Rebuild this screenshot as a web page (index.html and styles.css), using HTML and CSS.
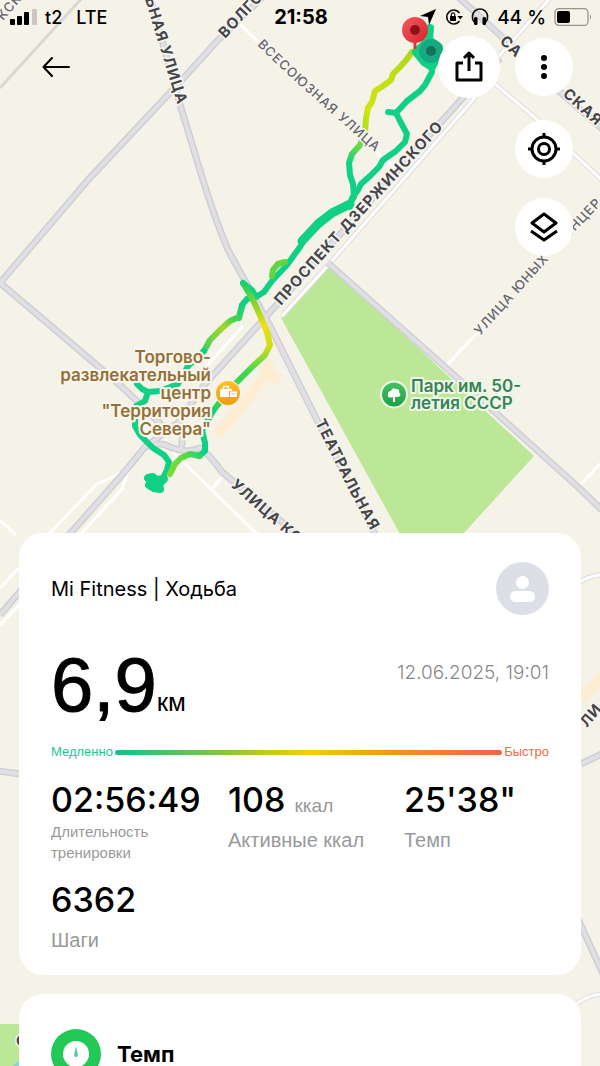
FILE: index.html
```html
<!DOCTYPE html>
<html lang="ru">
<head>
<meta charset="utf-8">
<meta name="viewport" content="width=device-width, initial-scale=1">
<title>Mi Fitness | Ходьба</title>
<link rel="stylesheet" href="styles.css">
</head>
<body>
<div class="screen">
  <svg class="map" viewBox="0 0 600 1066" preserveAspectRatio="xMidYMin slice" role="img" aria-label="Карта маршрута">
    <defs>
      <linearGradient id="g-north" gradientUnits="userSpaceOnUse" x1="412" y1="52" x2="352" y2="165">
        <stop offset="0" stop-color="#a8d820"/><stop offset=".25" stop-color="#c2de16"/><stop offset=".55" stop-color="#d3e311"/><stop offset=".75" stop-color="#a2dd20"/><stop offset="1" stop-color="#0fd285"/>
      </linearGradient>
      <linearGradient id="g-south" gradientUnits="userSpaceOnUse" x1="243" y1="283" x2="262" y2="400">
        <stop offset="0" stop-color="#17cf70"/><stop offset=".2" stop-color="#8bd52c"/><stop offset=".38" stop-color="#f0e10e"/><stop offset=".58" stop-color="#c9dd18"/><stop offset=".75" stop-color="#3cd653"/><stop offset="1" stop-color="#2fd354"/>
      </linearGradient>
      <linearGradient id="g-west" gradientUnits="userSpaceOnUse" x1="245" y1="305" x2="200" y2="360">
        <stop offset="0" stop-color="#10d086"/><stop offset=".25" stop-color="#44d350"/><stop offset=".45" stop-color="#a6d729"/><stop offset=".8" stop-color="#49d25c"/><stop offset="1" stop-color="#10d086"/>
      </linearGradient>
      <linearGradient id="g-end" gradientUnits="userSpaceOnUse" x1="168" y1="475" x2="205" y2="450">
        <stop offset="0" stop-color="#7bdc35"/><stop offset=".5" stop-color="#62d940"/><stop offset="1" stop-color="#10d086"/>
      </linearGradient>
      <linearGradient id="g-pin" x1="0" y1="0" x2="1" y2="1"><stop offset="0" stop-color="#f3595d"/><stop offset="1" stop-color="#d9252e"/></linearGradient>
      <linearGradient id="g-shop" x1="0" y1="0" x2="0" y2="1"><stop offset="0" stop-color="#ffc02e"/><stop offset="1" stop-color="#ee9d0c"/></linearGradient>
      <linearGradient id="g-tree" x1="0" y1="0" x2="0" y2="1"><stop offset="0" stop-color="#45c163"/><stop offset="1" stop-color="#1f9f45"/></linearGradient>
      <path id="p-left" d="M145 -1 L158 42 L184 125"/>
      <path id="p-volgo" d="M225 39 L270 -9"/>
      <path id="p-union" d="M257 45 Q279 67 306 91 T384 160"/>
      <path id="p-dzer" d="M281 306 L340 240 L450 120"/>
      <path id="p-teatr" d="M315 422 Q332 456 346 485 L390 566"/>
      <path id="p-young" d="M480 336 L560 247 L640 164"/>
      <path id="p-ul" d="M230 486 L262 514 L310 556"/>
      <path id="p-skaya" d="M562 95 L622 149"/>
    </defs>

    <rect width="600" height="1066" class="land"/>
    <path class="park" d="M328 264 L281 318 L400 534 L420 570 L463 534 L534 456Z"/>
    <rect class="park" y="1024" width="30" height="42"/>
    <path d="M13 1066 Q16 1061 26 1060 V1066Z" fill="#8fcdec"/>
    <path class="mall" d="M216 436 L250 396 L268 372 L280 381 M264 372 L272 362"/>
    <path class="mall" d="M581 699 L605 674"/>

    <g class="thin-gray"><path d="M82 -2 L0 88"/></g>
    <g class="lane-edge">
      <path d="M552 -4 L500 55 L473 100 L330 263 L282 316 M495 84 L540 122 L606 184"/>
      <path d="M578 583 Q590 575 606 574 M574 1006 Q588 994 606 994"/>
    </g>
    <g class="lane">
      <path d="M552 -4 L500 55 L473 100 L330 263 L282 316 M495 84 L540 122 L606 184"/>
      <path d="M445 367 L480 330 M578 487 L606 458 M238 22 L258 42 M376 152 L396 169"/>
      <path d="M243 326 L205 368 M128 470 L97 484 L44 539 M128 472 L122 489 L78 537 M173 452 L260 537 M223 476 L211 490"/>
      <path d="M0 520 L16 535 M0 588 L22 565 M0 625 L22 602 M268 290 L300 254"/>
      <path d="M578 583 Q590 575 606 574 M574 1006 Q588 994 606 994"/>
    </g>
    <g class="road-edge">
      <path d="M268 -8 L218 40 L180 82 L88 180 L0 283 L45 321 L120 385 L172 435"/>
      <path d="M148 -10 L181 108 L203 180 Q214 216 228 250 L270 326 L318 422 L388 560"/>
      <path d="M500 58 L460 101 L272 310 L205 384 L178 423 L145 447 L122 475 L60 545 L0 615"/>
      <path d="M328 263 L445 367 L578 487 L606 514"/>
      <path d="M456 -5 L500 35 L560 92 L606 132"/>
      <path d="M145 447 Q160 441 170 447 Q188 454 200 448 Q210 455 222 472 L300 537 M183 434 L181 450"/>
      <path d="M581 764 L606 752 M577 917 L604 976 M-2 771 L20 774"/>
    </g>
    <g class="road-fill">
      <path d="M268 -8 L218 40 L180 82 L88 180 L0 283 L45 321 L120 385 L172 435"/>
      <path d="M148 -10 L181 108 L203 180 Q214 216 228 250 L270 326 L318 422 L388 560"/>
      <path d="M500 58 L460 101 L272 310 L205 384 L178 423 L145 447 L122 475 L60 545 L0 615"/>
      <path d="M328 263 L445 367 L578 487 L606 514"/>
      <path d="M456 -5 L500 35 L560 92 L606 132"/>
      <path d="M145 447 Q160 441 170 447 Q188 454 200 448 Q210 455 222 472 L300 537 M183 434 L181 450"/>
      <path d="M581 764 L606 752 M577 917 L604 976 M-2 771 L20 774"/>
    </g>

    <g class="track">
      <path class="green" d="M431 55 L432 72 L425 85 L420 91 L407 101 L396 113 L388 112 M396 113 L400 121 L407 134 L405 142 L396 151 L383 160 L379 167 L370 176 L361 184 L358 190 L352 198 L350 207 L341 207 L332 212 L318 222 L307 235 L300 247 L287 265 L272 281 L264 292 L256 297 L252 290 L243 283"/>
      <path class="wide" d="M350 204 L332 213 L318 224 L302 241"/>
      <path d="M412 52 L407 59 L400 67 L393 74 L391 80 L383 86 L375 91 L372 102 L368 108 L366 118 L365 132 L360 145 L352 154 L349 163 L350 175 L353 184 L354 197 L347 207" stroke="url(#g-north)"/>
      <path class="lime" d="M285 262 L278 264 L273 270 L272 276"/>
      <path class="green" d="M256 297 L247 299 L242 305 L239 318"/>
      <path d="M242 307 L239 317 L230 321 L220 330 L210 340 L204 351" stroke="url(#g-west)"/>
      <path class="green" d="M204 351 L188 366 L178 384 L160 391 L148 392 L142 389 L137 384 M148 392 L145 401 L136 406 L135 426 L140 435 L153 448 L164 455 L169 462 L167 470 L162 480 L152 484"/>
      <path d="M243 283 L253 300 L262 320 L267 332 L270 345 L265 355 L253 366 L243 376 L230 389 L213 411" stroke="url(#g-south)"/>
      <path class="green" d="M213 411 L202 430 L205 443 L205 451 L199 456"/>
      <path d="M200 456 L190 454 L181 458 L175 464 L170 474" stroke="url(#g-end)"/>
      <path class="blob fill" d="M148 478 L153 477 L155 480 L164 479 L159 484 L160 489 L154 488 L149 485 L152 482Z"/>
      <path class="blob fill" d="M416 52 L424 62 L432 67 L437 57 L439 47 L429 40 Z M429 40 L430 28"/>
    </g>

    <g class="street">
      <text><textPath href="#p-left">ЬНАЯ УЛИЦА</textPath></text>
      <text><textPath href="#p-volgo">ВОЛГО</textPath></text>
      <text><textPath href="#p-dzer">ПРОСПЕКТ ДЗЕРЖИНСКОГО</textPath></text>
      <text><textPath href="#p-teatr">ТЕАТРАЛЬНАЯ</textPath></text>
      <text><textPath href="#p-ul">УЛИЦА КО</textPath></text>
      <text><textPath href="#p-skaya">СКАЯ</textPath></text>
      <text transform="translate(499 42) rotate(44)">СА</text>
      <text transform="translate(587 728) rotate(-50)">ЛИ</text>
      <text transform="translate(16 1046)">О</text>
    </g>
    <g class="street minor">
      <text><textPath href="#p-union">ВСЕСОЮЗНАЯ УЛИЦА</textPath></text>
      <text><textPath href="#p-young">УЛИЦА ЮНЫХ ПИОНЦЕР</textPath></text>
      <text transform="translate(3 21) rotate(-49)">КСК</text>
    </g>

    <circle cx="431" cy="51" r="12" fill="#17aa82"/><circle cx="431" cy="51" r="5" fill="#147258"/>
    <path d="M415 40 V49" stroke="#dc343b" stroke-width="3"/><circle cx="415" cy="30" r="13" fill="url(#g-pin)"/><circle cx="415" cy="30" r="5" fill="#8d1119"/>

    <g class="place mall-name">
      <text x="211" y="363">Торгово-</text><text x="211" y="381">развлекательный</text><text x="211" y="399">центр</text><text x="211" y="417">"Территория</text><text x="211" y="435">Севера"</text>
    </g>
    <g class="place park-name"><text x="411" y="392">Парк им. 50-</text><text x="411" y="409">летия СССР</text></g>

    <circle cx="228" cy="393" r="13" fill="#fff4dc"/><circle cx="228" cy="393" r="12" fill="url(#g-shop)"/>
    <path d="M221 389 H232 V391 H229 V397 H220 V390Z M230 391.500 H237 V397 H230Z" fill="#fff"/>
    <path d="M223.500 389 V386.500 H228.500 V389" fill="none" stroke="#fff" stroke-width="1.500"/>
    <path d="M229.500 391 V397 M231.500 393 Q233.500 396 235.500 393" fill="none" stroke="#f0a518" stroke-width=".8"/>
    <circle cx="394" cy="394.500" r="14" fill="#edf8e6"/><circle cx="394" cy="394.500" r="12" fill="url(#g-tree)"/>
    <path d="M393 402 V397 Q387 399 388 394 Q388 391 391 391 Q392 387 396 389 Q400 389 399 392 Q403 397 396 397 H395 V402Z" fill="#fff"/>
  </svg>

  <section class="map-area">
    <header class="status">
      <div class="carrier">
        <svg width="27" height="16" viewBox="0 0 27 16" aria-hidden="true"><rect y="10" width="5" height="6" rx="1"/><rect x="7" y="7" width="5" height="9" rx="1"/><rect x="14" y="3" width="5" height="13" rx="1"/><rect x="22" width="5" height="16" rx="1" fill="#c9c7c0"/></svg>
        <span>t2</span><span class="network">LTE</span>
      </div>
      <time class="clock">21:58</time>
      <div class="indicators">
        <svg width="17" height="16" viewBox="0 0 17 16" aria-hidden="true"><path d="M16 0 L9 16 L8 8 L0 7Z"/></svg>
        <svg class="lock" width="18" height="18" viewBox="0 0 18 18" aria-hidden="true"><path d="M14.500 5 A7 7 0 1 0 14.500 13" fill="none" stroke="#111" stroke-width="1.700"/><path d="M12.500 8 H18 L15.200 11.500Z"/><rect x="5" y="8" width="6" height="5" rx=".5"/><path d="M6.300 8 V6.500 A1.700 1.700 0 0 1 9.700 6.500 V8" fill="none" stroke="#111" stroke-width="1.200"/></svg>
        <svg width="18" height="18" viewBox="0 0 18 18" aria-hidden="true"><path d="M3 14 Q1 11 1.500 8 A7.500 7 0 0 1 16.500 8 Q17 11 15 14" fill="none" stroke="#111" stroke-width="1.700"/><rect x="3" y="9" width="3.500" height="8" rx="1.500"/><rect x="11.500" y="9" width="3.500" height="8" rx="1.500"/></svg>
        <span class="percent">44 %</span>
        <svg width="38" height="18" viewBox="0 0 38 18" aria-hidden="true"><rect x="1" y=".5" width="33" height="17" rx="4" fill="none" stroke="#96958f" stroke-width="1.300"/><rect x="3" y="3" width="13" height="12" rx="2"/><path d="M36 6 Q38 9 36 12Z" fill="#96958f"/></svg>
      </div>
    </header>
    <nav class="toolbar">
      <button class="back" aria-label="Назад"><svg width="28" height="20" viewBox="0 0 28 20"><path d="M27 10 H2 M10 1 L1.500 10 L10 19"/></svg></button>
      <button class="round share" aria-label="Поделиться"><svg width="28" height="32" viewBox="0 0 28 32"><path d="M8 12 H2 V29 H26 V12 H20 M14 20 V3 M9 7 L14 2 L19 7"/></svg></button>
      <div class="stack">
        <button class="round more" aria-label="Ещё"><svg width="8" height="24" viewBox="0 0 8 24"><g fill="#000" stroke="none"><circle cx="4" cy="3" r="3"/><circle cx="4" cy="12" r="3"/><circle cx="4" cy="21" r="3"/></g></svg></button>
        <button class="round" aria-label="Моё местоположение"><svg width="32" height="32" viewBox="0 0 32 32"><circle cx="16" cy="16" r="12"/><circle cx="16" cy="16" r="5.500"/><path d="M16 0 V4 M16 28 V32 M0 16 H4 M28 16 H32"/></svg></button>
        <button class="round" aria-label="Слои карты"><svg width="28" height="30" viewBox="0 0 28 30"><path d="M14 2 L26 11 L14 20 L2 11Z M1 19 L14 28 L27 19"/></svg></button>
      </div>
    </nav>
  </section>

  <main class="cards">
    <section class="card summary">
      <div class="title-row">
        <h1>Mi Fitness | Ходьба</h1>
        <svg class="avatar" width="53" height="53" viewBox="0 0 53 53" role="img" aria-label="Профиль"><circle cx="26.500" cy="26.500" r="26.500" fill="#dcdfe5"/><circle cx="26.500" cy="20.500" r="6.500" fill="#fff"/><rect x="14" y="29" width="25" height="11" rx="5.500" fill="#fff"/></svg>
      </div>
      <div class="distance-row">
        <p class="distance">6,9<span>км</span></p>
        <time class="date">12.06.2025, 19:01</time>
      </div>
      <div class="scale"><span class="slow">Медленно</span><span class="bar"></span><span class="fast">Быстро</span></div>
      <dl class="stats">
        <div><dd>02:56:49</dd><dt class="small">Длительность тренировки</dt></div>
        <div><dd>108 <span>ккал</span></dd><dt>Активные ккал</dt></div>
        <div><dd>25'38"</dd><dt>Темп</dt></div>
        <div><dd>6362</dd><dt>Шаги</dt></div>
      </dl>
    </section>
    <section class="card pace">
      <svg width="50" height="50" viewBox="0 0 50 50" aria-hidden="true"><circle cx="25" cy="25" r="25" fill="#22c957"/><circle cx="25" cy="25" r="13" fill="#fff"/><path d="M25 17 L27 26 Q27 28 25 28 Q23 28 23 26Z" fill="#4fcfa0"/></svg>
      <h2>Темп</h2>
    </section>
  </main>
</div>
</body>
</html>
```
FILE: styles.css
```css
* { box-sizing: border-box; }
body, h1, h2, p, dl, dd, dt { margin: 0; font-weight: 400; }
body { font-family: Inter, "Liberation Sans", sans-serif; color: #000; background: #f5f1e6; }
button { padding: 0; border: 0; cursor: pointer; }

.screen { position: relative; height: 100vh; overflow: hidden; display: flex; flex-direction: column; }
.map { position: absolute; inset: 0; width: 100%; height: 100%; }
.land { fill: #f5f2e7; }
.park { fill: #bbe796; }
.map path { stroke-linejoin: round; }
.mall { fill: none; stroke: #fdedd3; stroke-width: 11; }
.thin-gray { fill: none; stroke: #dad8d0; stroke-width: 3; }
.road-edge, .road-fill, .lane, .lane-edge { fill: none; }
.road-edge { stroke: #cecfd4; stroke-width: 7; }
.road-fill { stroke: #e0e0e4; stroke-width: 4; }
.lane { stroke: #fff; stroke-width: 3; }
.lane-edge { stroke: #dddce0; stroke-width: 5; }
.street text { font: 700 15px Inter, sans-serif; letter-spacing: 1px; fill: #45454a; stroke: #f7f5ef; stroke-width: 3; paint-order: stroke; }
.street.minor text { font-size: 13px; font-weight: 500; fill: #66666c; }
.track { fill: none; stroke-linecap: round; stroke-width: 6; }
.green { stroke: #10d086; }
.lime { stroke: #62d445; }
.wide { stroke: #10d086; stroke-width: 9; }
.blob { stroke: #10d086; stroke-width: 8; }
.fill { fill: #10d086; }
.place text { font: 600 17px Inter, sans-serif; stroke-width: 4; stroke-linejoin: round; paint-order: stroke; }
.mall-name text { text-anchor: end; fill: #94703a; stroke: #faf6ec; }
.park-name text { fill: #38825a; stroke: #edf8e6; }

.map-area { position: relative; flex: none; height: 50vh; }
.status { display: grid; grid-template-columns: 1fr auto 1fr; align-items: center; height: 34px; padding: 0 8px 0 10px; font-size: 18px; font-weight: 500; }
.carrier, .indicators { display: flex; align-items: center; gap: 8px; }
.network { margin-left: 6px; }
.indicators { justify-content: flex-end; }
.clock { font-size: 20px; font-weight: 700; }
.percent { font-size: 19px; }

.toolbar { display: flex; align-items: flex-start; gap: 15px; padding: 2px 27px 0 42px; }
.toolbar svg { display: block; fill: none; stroke: #000; stroke-width: 3; stroke-linejoin: round; }
.toolbar .back { margin: 21px auto 0 0; background: none; }
.toolbar .back svg { stroke-width: 2; stroke-linecap: round; }
.round { display: grid; place-items: center; width: 58px; height: 58px; border-radius: 50%; background: #fff; }
.share { width: 62px; height: 62px; }
.stack { display: flex; flex-direction: column; gap: 20px; padding-top: 2px; }
.more { margin-bottom: 4px; }

.cards { position: relative; flex: 1; display: flex; flex-direction: column; gap: 19px; padding: 0 19px; }
.card { flex: none; padding: 0 32px; border-radius: 24px; background: #fff; }
.title-row, .distance-row { display: flex; justify-content: space-between; }
.title-row { align-items: center; padding-top: 29px; }
h1 { font: 400 20px Inter, "Liberation Sans", sans-serif; }
.distance-row { align-items: flex-start; padding-top: 28px; }
.distance { font: 76px/84px "Liberation Sans", sans-serif; -webkit-text-stroke: 1px #000; }
.distance span { font-size: 26px; -webkit-text-stroke: 0; }
.date { padding-top: 18px; font-size: 19px; font-weight: 300; line-height: 24px; color: #888; }
.scale { display: flex; align-items: center; gap: 2px; font: 13px/16px "Liberation Sans", sans-serif; }
.slow { color: #1fc795; }
.fast { color: #ee6b42; }
.bar { flex: 1; height: 5px; border-radius: 3px; background: linear-gradient(90deg, #0fc38a, #8cc832 30%, #f6cb16 50%, #f79520 70%, #f26340); }
.stats { display: grid; grid-template-columns: 177fr 176fr 145fr; row-gap: 16px; padding: 19px 0 13px; }
.stats div { min-height: 83px; }
.stats dd { font-size: 34px; font-weight: 500; line-height: 42px; white-space: nowrap; }
.stats dd span { font: 19px "Liberation Sans", sans-serif; color: #999; }
.stats dt { padding-top: 7px; font: 20px/24px "Liberation Sans", sans-serif; color: #999; }
.stats .small { width: 120px; padding-top: 0; font-size: 15px; line-height: 21px; }
.pace { display: flex; align-items: center; gap: 16px; padding-top: 35px; padding-bottom: 35px; }
h2 { font: 700 22px Inter, "Liberation Sans", sans-serif; }
```
